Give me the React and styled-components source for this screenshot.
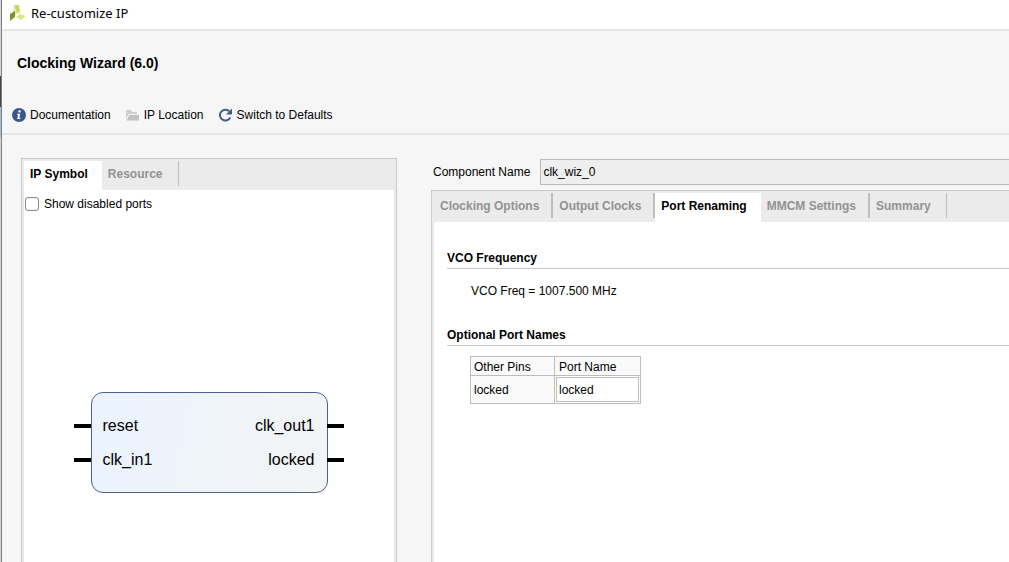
import React, { useState } from "react";
import styled, { createGlobalStyle } from "styled-components";

const GlobalStyle = createGlobalStyle`
  *, *::before, *::after { box-sizing: border-box; }
  body {
    margin: 0;
    background: #f6f6f6;
    color: #000;
    font: 12px/16px "Liberation Sans", Arial, sans-serif;
  }
  button, input { font: inherit; color: inherit; }
  h1, h2, p { margin: 0; }
`;

const Window = styled.div`
  display: flex;
  flex-direction: column;
  min-height: 100vh;
  overflow: hidden;
  padding-left: 2px;
  background:
    linear-gradient(#7d7f82, #7d7f82) 1px 0 / 1px 100% no-repeat,
    linear-gradient(#d3d5d8 0 76px, #46464a 76px 107px, #a9bcd6 107px 137px, #d3d5d8 137px) 0 0 / 1px 100% no-repeat;
`;

const TitleBar = styled.header`
  display: flex;
  align-items: center;
  gap: 5px;
  height: 31px;
  padding: 0 7px 3px;
  background: #fff;
  border-bottom: 2px solid #e6e6e6;
  font: 13px/18px "Noto Sans", "Open Sans", sans-serif;
`;

const Heading = styled.h1`
  padding: 24px 15px 0;
  font-size: 14px;
  line-height: 16px;
`;

const Toolbar = styled.nav`
  display: flex;
  align-items: center;
  gap: 14px;
  padding: 34px 9px 8px;
  border-bottom: 2px solid #e6e6e6;
`;

const ToolButton = styled.button`
  display: flex;
  align-items: center;
  gap: 4px;
  height: 20px;
  padding: 0;
  border: 0;
  background: none;
  white-space: nowrap;
`;

const Workspace = styled.main`
  flex: 1;
  display: grid;
  grid-template-columns: minmax(0, 376fr) minmax(0, 578fr);
  gap: 34px;
  padding: 23px 0 0 19px;
`;

const Panel = styled.section`
  flex: 1;
  display: flex;
  flex-direction: column;
  background: #fff;
  border: 1px solid #c9c9c9;
  border-width: 1px ${(p) => (p.$open ? "0" : "1px")} 0 1px;
`;

const PanelBody = styled.div`
  flex: 1;
  border: solid #e9e9e9;
  border-width: 0 ${(p) => (p.$open ? "0" : "2px")} 0 2px;
`;

const TabStrip = styled.div`
  display: flex;
  align-items: flex-start;
  height: 31px;
  padding: 2px 2px 0;
  background: #ebebeb;
`;

const Tab = styled.button`
  height: ${(p) => (p.$active ? "29px" : "25px")};
  padding: ${(p) => (p.$active ? "0 14px 4px 6px" : p.$last ? "0 15px 0 6px" : "0 12px 0 6px")};
  border: 0 solid #bdbdbd;
  border-right-width: ${(p) => (p.$active ? "0" : p.$last ? "1px" : "2px")};
  background: ${(p) => (p.$active ? "#fff" : "none")};
  color: ${(p) => (p.$active ? "#000" : "#929292")};
  font-weight: bold;
  white-space: nowrap;
`;

const CheckLabel = styled.label`
  display: flex;
  align-items: center;
  gap: 5px;
  padding: 6px 1px;
`;

const CheckBox = styled.input`
  appearance: none;
  width: 14px;
  height: 14px;
  margin: 0;
  border: 1px solid #858585;
  border-radius: 3px;
  background: #fff;
  &:checked { background: #3b5584; }
`;

const Diagram = styled.div`
  display: flex;
  justify-content: center;
  padding: 174px 0 24px;
`;

const Block = styled.div`
  display: flex;
  justify-content: space-between;
  width: 237px;
  padding: 24px 0 23px;
  border: 1px solid #4c618e;
  border-radius: 12px;
  background: linear-gradient(100deg, #ebf3fe, #eff4fa 45%, #f2f4f5);
`;

const Ports = styled.div`
  display: flex;
  flex-direction: column;
  gap: 16px;
`;

const Port = styled.div`
  display: flex;
  flex-direction: ${(p) => (p.$out ? "row-reverse" : "row")};
  align-items: center;
  gap: 12px;
  margin: ${(p) => (p.$out ? "0 -17px 0 0" : "0 0 0 -18px")};
  font-size: 16px;
  line-height: 18px;
  &::before {
    content: "";
    width: 17px;
    height: 4px;
    background: #000;
  }
`;

const Config = styled.div`
  display: flex;
  flex-direction: column;
  gap: 5px;
  padding-top: 1px;
`;

const NameRow = styled.div`
  display: flex;
  align-items: center;
  gap: 10px;
  padding-left: 2px;
  white-space: nowrap;
`;

const NameInput = styled.input`
  flex: 1;
  min-width: 0;
  height: 26px;
  padding: 0 2px;
  border: 1px solid #bababa;
  border-right: 0;
  border-radius: 0;
  background: #eee;
  outline: 0;
`;

const Group = styled.section`
  padding: 28px 0 0 13px;
`;

const GroupTitle = styled.h2`
  padding-bottom: 1px;
  border-bottom: 1px solid #c8c8c8;
  font-size: 12px;
  line-height: 17px;
`;

const GroupBody = styled.div`
  padding: ${(p) => (p.$table ? "10px 23px 0" : "14px 24px 0")};
`;

const PortTable = styled.table`
  border-collapse: collapse;
  background: #fafafa;
  th, td {
    border: 1px solid #bdbdbd;
    text-align: left;
    font-weight: normal;
  }
  th { width: 84px; height: 19px; padding: 1px 3px 0; white-space: nowrap; }
  td { height: 28px; padding: 1px 3px 0; }
  th:last-child { width: 86px; padding-left: 4px; }
  td:last-child { padding: 1px; background: #fff; }
`;

const CellInput = styled.input`
  display: block;
  width: 100%;
  height: 25px;
  padding: 0 2px;
  border: 1px solid #bdbdbd;
  border-radius: 0;
  background: #fff;
  outline: 0;
`;

const Logo = () => (
  <svg width="17" height="16" viewBox="0 0 17 16" aria-hidden="true">
    <path d="M5 0h5l1 6-3 3z" fill="#c8d85a" />
    <path d="M5 0l3 8-2 3-2-4z" fill="#e3eba6" />
    <path d="M1 9l5-3v6l-5 4z" fill="#83902b" />
    <path d="M7 12l4-3 6 2-5 4z" fill="#dce68f" />
    <path d="M10 6l2 1v3l-2-1z" fill="#eef3c9" />
  </svg>
);

const InfoIcon = () => (
  <svg width="15" height="14" viewBox="0 0 15 14" aria-hidden="true">
    <circle cx="8" cy="7" r="7" fill="#39578e" />
    <circle cx="8.5" cy="3.4" r="1.2" fill="#fff" />
    <path d="M6.2 5.8h3L8.3 9.7h1.1v1.4H6.2l.9-3.900h-.9z" fill="#fff" />
  </svg>
);

const FolderIcon = () => (
  <svg width="15" height="14" viewBox="0 0 15 14" aria-hidden="true">
    <path d="M1 12V2h5l1 2h5v2H4z" fill="#d0d0d0" />
    <path d="M4 7h10v5.500H1.500z" fill="#c2c2c2" />
    <path d="M1 12.500L4 6.500h8.500" fill="none" stroke="#f4f4f4" />
  </svg>
);

const ResetIcon = () => (
  <svg width="15" height="14" viewBox="0 0 15 14" aria-hidden="true">
    <path d="M12.300 9.300A5.400 5.400 0 1 1 11.200 3.300" fill="none" stroke="#3f5c8e" strokeWidth="2" />
    <path d="M14 .5V6.500H8z" fill="#3f5c8e" />
  </svg>
);

const TABS = ["Clocking Options", "Output Clocks", "Port Renaming", "MMCM Settings", "Summary"];
const SIDE_TABS = ["IP Symbol", "Resource"];

function Tabs({ items, active, label }) {
  return (
    <TabStrip role="tablist" aria-label={label}>
      {items.map((name, i) => (
        <Tab
          key={name}
          type="button"
          role="tab"
          aria-selected={name === active}
          $active={name === active}
          $last={i === items.length - 1}
        >
          {name}
        </Tab>
      ))}
    </TabStrip>
  );
}

export default function App() {
  const [showDisabled, setShowDisabled] = useState(false);
  const [component, setComponent] = useState("clk_wiz_0");
  const [lockedName, setLockedName] = useState("locked");

  return (
    <>
      <GlobalStyle />
      <Window>
        <TitleBar><Logo />Re-customize IP</TitleBar>
        <Heading>Clocking Wizard (6.0)</Heading>
        <Toolbar>
          <ToolButton type="button"><InfoIcon />Documentation</ToolButton>
          <ToolButton type="button"><FolderIcon />IP Location</ToolButton>
          <ToolButton type="button"><ResetIcon />Switch to Defaults</ToolButton>
        </Toolbar>
        <Workspace>
          <Panel>
            <Tabs items={SIDE_TABS} active="IP Symbol" label="Preview" />
            <PanelBody>
              <CheckLabel>
                <CheckBox type="checkbox" checked={showDisabled} onChange={(e) => setShowDisabled(e.target.checked)} />
                Show disabled ports
              </CheckLabel>
              <Diagram>
                <Block>
                  <Ports>
                    <Port>reset</Port>
                    <Port>clk_in1</Port>
                  </Ports>
                  <Ports>
                    <Port $out>clk_out1</Port>
                    <Port $out>locked</Port>
                  </Ports>
                </Block>
              </Diagram>
            </PanelBody>
          </Panel>
          <Config>
            <NameRow>
              <label htmlFor="component-name">Component Name</label>
              <NameInput id="component-name" value={component} onChange={(e) => setComponent(e.target.value)} />
            </NameRow>
            <Panel $open>
              <Tabs items={TABS} active="Port Renaming" label="Configuration" />
              <PanelBody $open>
                <Group>
                  <GroupTitle>VCO Frequency</GroupTitle>
                  <GroupBody><p>VCO Freq = 1007.500 MHz</p></GroupBody>
                </Group>
                <Group>
                  <GroupTitle>Optional Port Names</GroupTitle>
                  <GroupBody $table>
                    <PortTable>
                      <thead>
                        <tr><th scope="col">Other Pins</th><th scope="col">Port Name</th></tr>
                      </thead>
                      <tbody>
                        <tr>
                          <td>locked</td>
                          <td>
                            <CellInput aria-label="Port name for locked" value={lockedName} onChange={(e) => setLockedName(e.target.value)} />
                          </td>
                        </tr>
                      </tbody>
                    </PortTable>
                  </GroupBody>
                </Group>
              </PanelBody>
            </Panel>
          </Config>
        </Workspace>
      </Window>
    </>
  );
}
